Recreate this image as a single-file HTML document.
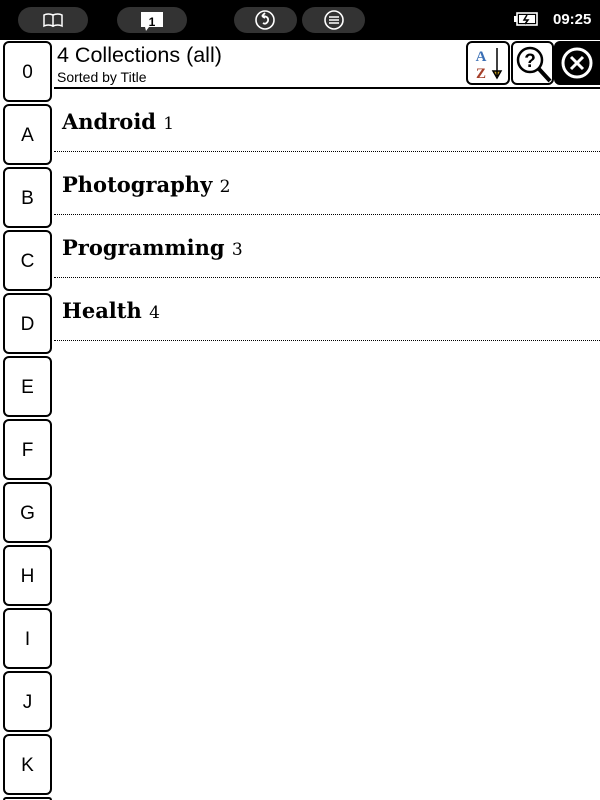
<!DOCTYPE html>
<html><head><style>
*{margin:0;padding:0;box-sizing:border-box}
html,body{width:600px;height:800px;overflow:hidden}
body{background:#fff;position:relative;font-family:"Liberation Sans",sans-serif}
.top{position:absolute;left:0;top:0;width:600px;height:40px;background:#000}
.pill{position:absolute;top:7px;height:26px;background:#333;border-radius:13px}
.tab{position:absolute;left:3px;width:49px;height:61px;border:2px solid #000;border-radius:6px;font-size:19px;text-align:center;line-height:59px;background:#fff}
.row{position:absolute;left:54px;width:546px;height:63px;border-bottom:1px dotted #000;font-family:"DejaVu Serif","Liberation Serif",serif}
.row b{position:absolute;left:8px;top:20px;font-size:21px}
.row span{font-weight:normal;font-size:17px}
.ib{position:absolute;top:41px;height:44px;border:2px solid #000;border-radius:6px}
</style></head><body>
<div class="top">
<div class="pill" style="left:18px;width:70px"><svg width="70" height="26"><path d="M26 8 Q30 6 35 8 V19 Q30 17 26 19 Z M35 8 Q40 6 44 8 V19 Q40 17 35 19 Z" fill="none" stroke="#fff" stroke-width="1.5"/></svg></div>
<div class="pill" style="left:117px;width:70px"><svg width="70" height="26"><path d="M24 5 H46 V20 H32 L29 24 L28 20 H24 Z" fill="#fff"/><text x="35" y="19" font-size="12" font-weight="bold" text-anchor="middle" font-family="Liberation Sans">1</text></svg></div>
<div class="pill" style="left:234px;width:63px"><svg width="63" height="26"><circle cx="31" cy="13" r="9" fill="none" stroke="#fff" stroke-width="1.6"/><path d="M28 9 L31 6 M28 9 L31 11 M28 9 Q35 9 34 14 Q32 18 29 16" fill="none" stroke="#fff" stroke-width="1.8"/></svg></div>
<div class="pill" style="left:302px;width:63px"><svg width="63" height="26"><circle cx="32" cy="13" r="9" fill="none" stroke="#fff" stroke-width="1.6"/><path d="M27 10H37M27 13H37M27 16H37" stroke="#fff" stroke-width="1.4"/></svg></div>
<svg style="position:absolute;left:514px;top:12px" width="24" height="14"><rect x="3" y="1" width="20" height="12" fill="none" stroke="#fff" stroke-width="1.6"/><rect x="0" y="4" width="3" height="6" fill="#fff"/><rect x="5" y="3" width="16" height="8" fill="#fff"/><path d="M13 3 L10 8 H14 L11 12" stroke="#000" stroke-width="1.5" fill="none"/></svg>
<div style="position:absolute;left:553px;top:11px;color:#fff;font-weight:bold;font-size:15px">09:25</div>
</div>
<div style="position:absolute;left:57px;top:43px;font-size:21.5px">4 Collections (all)</div>
<div style="position:absolute;left:57px;top:69px;font-size:14px">Sorted by Title</div>
<div style="position:absolute;left:54px;top:87px;width:546px;height:2px;background:#000"></div>
<div class="ib" style="left:466px;width:44px"><svg width="40" height="40"><text x="13" y="18" font-size="15" font-weight="bold" fill="#3a6fb5" text-anchor="middle" font-family="Liberation Serif">A</text><text x="13" y="35" font-size="15" font-weight="bold" fill="#a5402b" text-anchor="middle" font-family="Liberation Serif">Z</text><path d="M29 5 V33 M25 28 L29 35 L33 28 Z" stroke="#000" stroke-width="1.5" fill="#c9a020"/></svg></div>
<div class="ib" style="left:511px;width:43px"><svg width="39" height="40"><circle cx="17" cy="17" r="12" fill="none" stroke="#000" stroke-width="2.5"/><text x="17" y="24" font-size="19" font-weight="bold" text-anchor="middle" font-family="Liberation Sans">?</text><path d="M26 26 L37 38" stroke="#000" stroke-width="4"/></svg></div>
<div class="ib" style="left:554px;width:46px;background:#000;border-radius:6px 0 0 6px"><svg width="44" height="40"><circle cx="21" cy="20" r="14" fill="none" stroke="#fff" stroke-width="3"/><path d="M15 14 L27 26 M27 14 L15 26" stroke="#fff" stroke-width="3"/></svg></div>
<div class="row" style="top:89px"><b>Android <span>1</span></b></div>
<div class="row" style="top:152px"><b>Photography <span>2</span></b></div>
<div class="row" style="top:215px"><b>Programming <span>3</span></b></div>
<div class="row" style="top:278px"><b>Health <span>4</span></b></div>
<div class="tab" style="top:41px">0</div>
<div class="tab" style="top:104px">A</div>
<div class="tab" style="top:167px">B</div>
<div class="tab" style="top:230px">C</div>
<div class="tab" style="top:293px">D</div>
<div class="tab" style="top:356px">E</div>
<div class="tab" style="top:419px">F</div>
<div class="tab" style="top:482px">G</div>
<div class="tab" style="top:545px">H</div>
<div class="tab" style="top:608px">I</div>
<div class="tab" style="top:671px">J</div>
<div class="tab" style="top:734px">K</div>
<div style="position:absolute;left:3px;top:797px;width:49px;height:3px;border:2px solid #000;border-bottom:0;border-radius:6px 6px 0 0"></div>
</body></html>
